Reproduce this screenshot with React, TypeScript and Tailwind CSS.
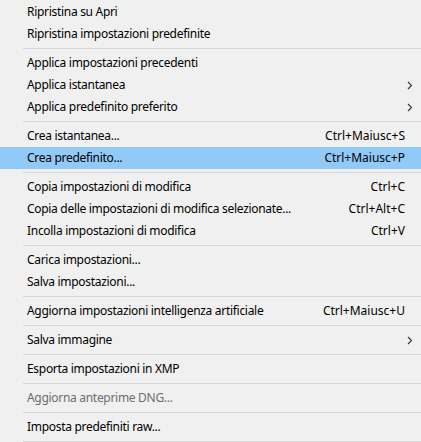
type Item = {
  label: string;
  shortcut?: string;
  submenu?: boolean;
  active?: boolean;
  disabled?: boolean;
};

// null marks a separator
const items: (Item | null)[] = [
  { label: "Ripristina su Apri" },
  { label: "Ripristina impostazioni predefinite" },
  null,
  { label: "Applica impostazioni precedenti" },
  { label: "Applica istantanea", submenu: true },
  { label: "Applica predefinito preferito", submenu: true },
  null,
  { label: "Crea istantanea...", shortcut: "Ctrl+Maiusc+S" },
  { label: "Crea predefinito...", shortcut: "Ctrl+Maiusc+P", active: true },
  null,
  { label: "Copia impostazioni di modifica", shortcut: "Ctrl+C" },
  { label: "Copia delle impostazioni di modifica selezionate...", shortcut: "Ctrl+Alt+C" },
  { label: "Incolla impostazioni di modifica", shortcut: "Ctrl+V" },
  null,
  { label: "Carica impostazioni..." },
  { label: "Salva impostazioni..." },
  null,
  { label: "Aggiorna impostazioni intelligenza artificiale", shortcut: "Ctrl+Maiusc+U" },
  null,
  { label: "Salva immagine", submenu: true },
  null,
  { label: "Esporta impostazioni in XMP" },
  null,
  { label: "Aggiorna anteprime DNG...", disabled: true },
  null,
  { label: "Imposta predefiniti raw..." },
  null,
];

const Chevron = () => (
  <svg width="6" height="9" viewBox="0 0 6 9" fill="none">
    <path d="M1 1 L4.5 4.5 L1 8" stroke="#333" strokeWidth="1.1" />
  </svg>
);

export default function App() {
  return (
    <div
      className="w-[421px] h-[442px] overflow-hidden bg-[#f0f0f0] pt-[1px] text-[12px] text-black"
      style={{ fontFamily: '"Noto Sans", "Segoe UI", sans-serif' }}
    >
      {items.map((item, i) =>
        item === null ? (
          <div key={i} className="h-[7px] flex items-center pl-[23px]">
            <div className="h-px w-full bg-[#d7d7d7]" />
          </div>
        ) : (
          <div
            key={i}
            className={
              "h-[22px] flex items-center justify-between pl-[27px] " +
              (item.submenu ? "pr-[8px] " : "pr-[16px] ") +
              (item.active ? "bg-[#91c9f7] " : "") +
              (item.disabled ? "text-[#6d6d6d]" : "")
            }
          >
            <span className="whitespace-nowrap tracking-[-0.3px]">{item.label}</span>
            {item.shortcut && <span className="whitespace-nowrap">{item.shortcut}</span>}
            {item.submenu && <Chevron />}
          </div>
        )
      )}
    </div>
  );
}
